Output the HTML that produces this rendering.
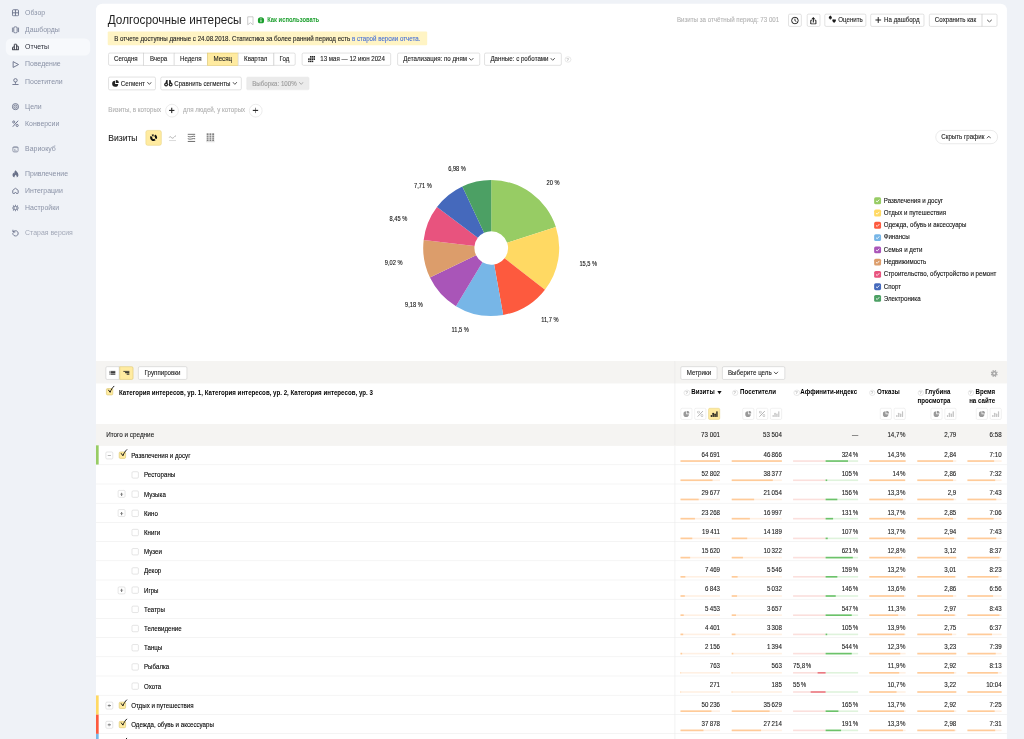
<!DOCTYPE html><html lang="ru"><head><meta charset="utf-8"><title>Долгосрочные интересы</title><style>
*{box-sizing:border-box}
html,body{margin:0;padding:0}
body{width:1024px;height:739px;overflow:hidden;background:#eff2f7;font-family:"Liberation Sans",Arial,sans-serif;}
#root{position:absolute;left:0;top:0;width:1920px;height:1386px;transform:scale(.5333333);transform-origin:0 0;filter:blur(.5px);overflow:hidden;color:#222;font-size:13px}
.abs{position:absolute}
#side{position:absolute;left:0;top:0;width:180px;height:1386px}
.nav{position:absolute;left:11px;width:158px;height:32px;border-radius:10px;color:#8a92a6;font-size:13px;line-height:32px;white-space:nowrap}
.nav.on{background:#f7f9fc;color:#2b2e3a}
.nav svg{position:absolute;left:11px;top:9.3px;width:14px;height:14px;color:#6a728a}
.nav.on svg{color:#2b2e3a}
.nav span{position:absolute;left:36px;top:0}
#card{-webkit-text-stroke:.2px;position:absolute;left:180px;top:7px;width:1708px;height:1400px;background:#fff;border-radius:12px 12px 0 0}
.btn{position:absolute;height:24px;border:1px solid #c9c9c9;border-radius:3px;background:#fff;font-size:13px;line-height:22px;text-align:center;color:#222;white-space:nowrap;display:flex;justify-content:center;align-items:center}
.btn.y{background:#ffeba0;border-color:#dcc56e}
.btn.g{background:#ebebeb;border-color:#ebebeb;color:#999}
.t{position:absolute;white-space:nowrap;transform:scaleX(.89);transform-origin:0 50%}
.sx{display:inline-block;transform:scaleX(.89);transform-origin:50% 50%;white-space:nowrap}
.sxl{display:inline-block;transform:scaleX(.89);transform-origin:0 50%;white-space:nowrap}
.chev{display:inline-block;width:10.5px;height:6.5px;vertical-align:1px;margin-left:4px}
.ck{position:absolute;width:13px;height:13px;border:1px solid #cdcdcd;border-radius:2.5px;background:#fff}
.ck.on{background:#ffeba0;border-color:#d4bd5e}
.ck.on svg{position:absolute;left:1px;top:-6px;width:15px;height:16px}
.tg{position:absolute;width:14px;height:14px;border:1px solid #d0d0d0;border-radius:2.5px;background:#fff}
.tg:before{content:"";position:absolute;left:3px;top:5.5px;width:6px;height:1.4px;background:#7a7a7a}
.tg.p:after{content:"";position:absolute;left:5.3px;top:3.2px;width:1.4px;height:6px;background:#7a7a7a}
.row{position:absolute;left:0;width:1708px;height:36px;border-bottom:1px solid #ececec}
.num{position:absolute;top:9px;font-size:13px;line-height:14px;text-align:right;white-space:nowrap;color:#222;transform:scaleX(.89);transform-origin:100% 50%}
.bar{position:absolute;top:28px;height:3px;background:#fff0e3}
.bar i{position:absolute;left:0;top:0;height:3px;background:#ffcb99}
.hl{position:absolute;width:11.5px;height:11.5px;border:1px solid #d6d6d6;border-radius:50%}
.hl:before{content:"?";position:absolute;left:0;top:0;width:9px;height:9px;font-size:8px;line-height:9.5px;text-align:center;color:#c4c4c4;font-weight:bold}
.ib{position:absolute;width:22px;height:22px;border:1px solid #e4e4e4;border-radius:3px;background:#fff}
.ib.y{background:#ffeba0;border-color:#e3cf80}
.ib svg{position:absolute;left:4px;top:4px;width:12px;height:12px}
.hd{-webkit-text-stroke:0;position:absolute;font-weight:bold;font-size:13px;line-height:16px;text-align:right;white-space:nowrap;color:#000;transform:scaleX(.89);transform-origin:100% 50%}
</style></head><body><div id="root">
<div id="side">
<div class="nav" style="top:7.7px"><svg viewBox="0 0 16 16"><rect x="1.5" y="1.5" width="13" height="13" rx="2" fill="none" stroke="currentColor" stroke-width="2"/><path d="M8 1.5v13M1.5 8h13" stroke="currentColor" stroke-width="2"/></svg><span>Обзор</span></div>
<div class="nav" style="top:40px"><svg viewBox="0 0 16 16"><rect x="4.4" y="1.3" width="7.2" height="13.4" rx="2.6" fill="none" stroke="currentColor" stroke-width="2"/><path d="M1.2 4v8M14.8 4v8" stroke="currentColor" stroke-width="2" stroke-linecap="round"/></svg><span>Дашборды</span></div>
<div class="nav on" style="top:72px"><svg viewBox="0 0 16 16"><path d="M1.8 14V9.2a1 1 0 0 1 1-1h2.7M5.5 14V3a1 1 0 0 1 1-1h3a1 1 0 0 1 1 1v11M10.5 6.2h2.7a1 1 0 0 1 1 1V14M1 14.1h14" fill="none" stroke="currentColor" stroke-width="2"/></svg><span>Отчеты</span></div>
<div class="nav" style="top:104.3px"><svg viewBox="0 0 16 16"><path d="M3 1.8L14.6 8 3 14.2z" fill="none" stroke="currentColor" stroke-width="2" stroke-linejoin="round"/></svg><span>Поведение</span></div>
<div class="nav" style="top:137px"><svg viewBox="0 0 16 16"><circle cx="8" cy="5.3" r="3.7" fill="none" stroke="currentColor" stroke-width="2"/><path d="M8 9.4v2.4M2.3 14.3h11.4" fill="none" stroke="currentColor" stroke-width="2" stroke-linecap="round"/></svg><span>Посетители</span></div>
<div class="nav" style="top:184px"><svg viewBox="0 0 16 16"><circle cx="8" cy="8" r="6.6" fill="none" stroke="currentColor" stroke-width="2"/><circle cx="8" cy="8" r="3.4" fill="none" stroke="currentColor" stroke-width="1.9"/><circle cx="8" cy="8" r="1" fill="currentColor"/></svg><span>Цели</span></div>
<div class="nav" style="top:216px"><svg viewBox="0 0 16 16"><circle cx="4.3" cy="4.3" r="2.3" fill="none" stroke="currentColor" stroke-width="2"/><circle cx="11.7" cy="11.7" r="2.3" fill="none" stroke="currentColor" stroke-width="2"/><path d="M13.2 2.2L2.8 13.8" stroke="currentColor" stroke-width="2.1" stroke-linecap="round"/></svg><span>Конверсии</span></div>
<div class="nav" style="top:263.3px"><svg viewBox="0 0 16 16" style="opacity:.8"><rect x="2.4" y="2.4" width="11.2" height="11.2" rx="2.6" fill="none" stroke="currentColor" stroke-width="1.7"/><path d="M2.4 4.3h11.2" stroke="currentColor" stroke-width="1.6"/><path d="M4.8 8.2c3 0 5 1.5 5.4 4.6M4.8 11h2.4v2" fill="none" stroke="currentColor" stroke-width="1.5" opacity=".85"/></svg><span>Вариокуб</span></div>
<div class="nav" style="top:309.5px"><svg viewBox="0 0 16 16"><path transform="translate(8 8) scale(1.13) translate(-8 -8.2)" d="M8.3 1C9 3.6 13.6 6 13.6 10.2c0 2.8-2 4.6-3.7 4.8.9-1.1 1-2.9-1.9-5.2-.7 1.7-2.4 2.9-1.4 5.2C4.3 14.7 2.4 13 2.4 10.2 2.4 8 3.7 6.8 4.4 5.6c.2 1 .7 1.6 1.3 2C5.6 5 6.7 2.6 8.3 1z" fill="currentColor"/></svg><span>Привлечение</span></div>
<div class="nav" style="top:341.5px"><svg viewBox="0 0 16 16"><path d="M8 2.2l5.8 4.6v5.4a1.3 1.3 0 0 1-1.3 1.3H10.2a2.2 2.2 0 0 0-4.4 0H3.5a1.3 1.3 0 0 1-1.3-1.3V6.8z" fill="none" stroke="currentColor" stroke-width="2" stroke-linejoin="round"/></svg><span>Интеграции</span></div>
<div class="nav" style="top:373.3px"><svg viewBox="0 0 16 16"><circle cx="8" cy="8" r="3.6" fill="none" stroke="currentColor" stroke-width="2"/><path d="M8 .8v2.6M8 12.6v2.6M.8 8h2.6M12.6 8h2.6M2.9 2.9l1.9 1.9M11.2 11.2l1.9 1.9M13.1 2.9l-1.9 1.9M4.8 11.2l-1.9 1.9" stroke="currentColor" stroke-width="2.3"/></svg><span>Настройки</span></div>
<div class="nav" style="top:420.5px;color:#a3a9b8"><svg viewBox="0 0 16 16"><path d="M3.2 5.4A5.8 5.8 0 1 1 2.2 9" fill="none" stroke="currentColor" stroke-width="2" stroke-linecap="round"/><path d="M2.6 1.6v4.2h4.2" fill="none" stroke="currentColor" stroke-width="2" stroke-linecap="round" stroke-linejoin="round"/></svg><span>Старая версия</span></div>
</div>
<div id="card">
<div class="t" style="left:22px;top:15px;font-size:23px;line-height:30px;color:#1f1f1f;-webkit-text-stroke:0;transform:scaleX(.96)">Долгосрочные интересы</div>
<svg class="abs" style="left:282.5px;top:22.5px;width:13px;height:18px" viewBox="0 0 13 18"><path d="M1.5 1.5h10v15L6.5 12.5 1.5 16.5z" fill="none" stroke="#bdbdbd" stroke-width="1.5"/></svg>
<svg class="abs" style="left:303px;top:24.5px;width:12.5px;height:12.5px" viewBox="0 0 13 13"><circle cx="6.5" cy="6.5" r="6.2" fill="#1a9e2c"/><rect x="5.7" y="5.4" width="1.7" height="4.6" fill="#fff"/><circle cx="6.5" cy="3.5" r="1.1" fill="#fff"/></svg>
<div class="t" style="left:321px;top:23px;font-size:13px;line-height:15px;font-weight:bold;-webkit-text-stroke:0;color:#1a9e2c;transform:scaleX(.84)">Как использовать</div>
<div class="t" style="left:1085px;top:23px;width:260px;margin-left:-64px;text-align:right;transform-origin:100% 50%;font-size:13px;line-height:15px;color:#b3b3b3">Визиты за отчётный период: 73 001</div>
<div class="btn " style="left:1297.5px;top:18.5px;width:25px;height:24.5px;line-height:22.5px;"><svg style="width:15px;height:15px;margin-top:2px" viewBox="0 0 15 15"><circle cx="7.5" cy="7.5" r="6.2" fill="none" stroke="#1a1a1a" stroke-width="1.8"/><path d="M7.5 4v3.8l2.6 1.3" fill="none" stroke="#1a1a1a" stroke-width="1.6"/></svg></div>
<div class="btn " style="left:1332.5px;top:18.5px;width:25px;height:24.5px;line-height:22.5px;"><svg style="width:14px;height:15px;margin-top:1px" viewBox="0 0 14 15"><path d="M4.2 7H2.2v7h9.6V7H9.8" fill="none" stroke="#1a1a1a" stroke-width="1.8"/><path d="M7 11V4" stroke="#1a1a1a" stroke-width="2"/><path d="M3.3 5L7 .8 10.7 5z" fill="#1a1a1a"/></svg></div>
<div class="btn " style="left:1366px;top:18.5px;width:77.5px;height:24.5px;line-height:22.5px;"><span class="sx"><svg style="width:19px;height:16.5px;vertical-align:-2.5px;margin-right:3px" viewBox="0 0 15 15"><path d="M3.8 .8c1.5 1.3 3 2.4 3 4.1a1.7 1.7 0 0 1-2.4 1.5l.5 1.4H2.7l.5-1.4A1.7 1.7 0 0 1 .8 4.9c0-1.7 1.5-2.8 3-4.1z" fill="#1a1a1a"/><path d="M11 13.8C9.3 12.4 7.5 11 7.5 9.2a1.9 1.9 0 0 1 3.5-1 1.9 1.9 0 0 1 3.5 1c0 1.8-1.8 3.2-3.5 4.6z" fill="#1a1a1a"/></svg>Оценить</span></div>
<div class="btn " style="left:1451.5px;top:18.5px;width:101.5px;height:24.5px;line-height:22.5px;"><span class="sx"><svg style="width:12.5px;height:11px;vertical-align:-1px;margin-right:6px" viewBox="0 0 11 11" preserveAspectRatio="none"><path d="M5.5 0v11M0 5.5h11" stroke="#1a1a1a" stroke-width="1.8"/></svg>На дашборд</span></div>
<div class="btn " style="left:1562px;top:18.5px;width:100px;height:24.5px;line-height:22.5px;border-radius:3px 0 0 3px"><span class="sx">Сохранить как</span></div>
<div class="btn " style="left:1661px;top:18.5px;width:29px;height:24.5px;line-height:22.5px;border-radius:0 3px 3px 0"><svg class="chev" style="margin:2px 0 0 0" viewBox="0 0 10.5 6.5"><path d="M0.8 0.9 L5.25 5.2 L9.7 0.9" fill="none" stroke="#222" stroke-width="1.5"/></svg></div>
<div class="abs" style="left:22px;top:52px;width:599px;height:26px;background:#fff4c4;border-radius:2px;padding-left:11.5px;font-size:13px;line-height:26px;white-space:nowrap;color:#222"><span class="sxl">В отчете доступны данные с 24.08.2018. Статистика за более ранний период есть <span style="color:#4670d6">в старой версии отчета.</span></span></div>
<div class="btn " style="left:22.5px;top:92px;width:67.5px;height:24px;line-height:22px;border-radius:3px 0 0 3px;"><span class="sx">Сегодня</span></div>
<div class="btn " style="left:89px;top:92px;width:57.5px;height:24px;line-height:22px;border-radius:0;"><span class="sx">Вчера</span></div>
<div class="btn " style="left:145.5px;top:92px;width:64.5px;height:24px;line-height:22px;border-radius:0;"><span class="sx">Неделя</span></div>
<div class="btn y" style="left:209px;top:92px;width:57.5px;height:24px;line-height:22px;border-radius:0;"><span class="sx">Месяц</span></div>
<div class="btn " style="left:265.5px;top:92px;width:68.5px;height:24px;line-height:22px;border-radius:0;"><span class="sx">Квартал</span></div>
<div class="btn " style="left:333px;top:92px;width:41px;height:24px;line-height:22px;border-radius:0 3px 3px 0;"><span class="sx">Год</span></div>
<div class="btn " style="left:385.5px;top:92px;width:167px;height:24px;line-height:22px;"><span class="sx"><svg style="width:15.5px;height:12px;vertical-align:-1.5px;margin-right:11px" viewBox="0 0 13 10" preserveAspectRatio="none"><g fill="#222"><rect x="4" y="0" width="2.6" height="2.6"/><rect x="7.2" y="0" width="2.6" height="2.6"/><rect x="10.4" y="0" width="2.6" height="2.6"/><rect x="0.8" y="3.6" width="2.6" height="2.6"/><rect x="4" y="3.6" width="2.6" height="2.6"/><rect x="7.2" y="3.6" width="2.6" height="2.6"/><rect x="10.4" y="3.6" width="2.6" height="2.6"/><rect x="0.8" y="7.2" width="2.6" height="2.6"/><rect x="4" y="7.2" width="2.6" height="2.6"/><rect x="7.2" y="7.2" width="2.6" height="2.6"/></g></svg>13 мая — 12 июн 2024</span></div>
<div class="btn " style="left:564.5px;top:92px;width:155px;height:24px;line-height:22px;"><span class="sx">Детализация: по дням<svg class="chev" viewBox="0 0 10.5 6.5"><path d="M0.8 0.9 L5.25 5.2 L9.7 0.9" fill="none" stroke="#222" stroke-width="1.5"/></svg></span></div>
<div class="btn " style="left:728px;top:92px;width:145px;height:24px;line-height:22px;"><span class="sx">Данные: с роботами<svg class="chev" viewBox="0 0 10.5 6.5"><path d="M0.8 0.9 L5.25 5.2 L9.7 0.9" fill="none" stroke="#222" stroke-width="1.5"/></svg></span></div>
<div class="hl" style="left:879px;top:98.5px"></div>
<div class="btn " style="left:22.5px;top:136.5px;width:89.5px;height:25px;line-height:23px;"><span class="sx"><svg style="width:15px;height:13.5px;vertical-align:-2.5px;margin-right:4px" viewBox="0 0 13 13" preserveAspectRatio="none"><path d="M6 1.2A5.6 5.6 0 1 0 11.8 7H6z" fill="#222"/><path d="M7.3 0a5.6 5.6 0 0 1 5.6 5.6H7.3z" fill="#222"/></svg>Сегмент<svg class="chev" viewBox="0 0 10.5 6.5"><path d="M0.8 0.9 L5.25 5.2 L9.7 0.9" fill="none" stroke="#222" stroke-width="1.5"/></svg></span></div>
<div class="btn " style="left:120.5px;top:136.5px;width:152.5px;height:25px;line-height:23px;"><span class="sx"><svg style="width:18.5px;height:14px;vertical-align:-2.5px;margin-right:3px" viewBox="0 0 15 12" preserveAspectRatio="none"><circle cx="3.6" cy="8" r="3.3" fill="#222"/><circle cx="11.4" cy="8" r="3.3" fill="#222"/><path d="M2.5 5L4 .8h2.2v6zM12.5 5L11 .8H8.8v6z" fill="#222"/><circle cx="3.6" cy="8" r="1.3" fill="#fff"/><circle cx="11.4" cy="8" r="1.3" fill="#fff"/></svg>Сравнить сегменты<svg class="chev" viewBox="0 0 10.5 6.5"><path d="M0.8 0.9 L5.25 5.2 L9.7 0.9" fill="none" stroke="#222" stroke-width="1.5"/></svg></span></div>
<div class="btn g" style="left:282px;top:136.5px;width:118px;height:25px;line-height:23px;"><span class="sx">Выборка: 100%<svg class="chev" viewBox="0 0 10.5 6.5"><path d="M0.8 0.9 L5.25 5.2 L9.7 0.9" fill="none" stroke="#999" stroke-width="1.5"/></svg></span></div>
<div class="t" style="left:22.5px;top:191px;font-size:13px;line-height:16px;color:#b0b0b0">Визиты, в которых</div>
<div class="abs" style="left:129.8px;top:187.5px;width:25px;height:25px;border:1px solid #dcdcdc;border-radius:50%;background:#fff"><i class="abs" style="left:6.5px;top:10.7px;width:10px;height:1.6px;background:#222"></i><i class="abs" style="left:10.7px;top:6.5px;width:1.6px;height:10px;background:#222"></i></div>
<div class="t" style="left:162.5px;top:191px;font-size:13px;line-height:16px;color:#b0b0b0">для людей, у которых</div>
<div class="abs" style="left:286.9px;top:187.5px;width:25px;height:25px;border:1px solid #dcdcdc;border-radius:50%;background:#fff"><i class="abs" style="left:6.5px;top:10.7px;width:10px;height:1.6px;background:#222"></i><i class="abs" style="left:10.7px;top:6.5px;width:1.6px;height:10px;background:#222"></i></div>
<div class="t" style="left:22.5px;top:239px;font-size:18px;line-height:24px;color:#222">Визиты</div>
<div class="btn y" style="left:92.5px;top:236.5px;width:30.5px;height:29.5px;border-radius:4px;border-color:#e6d280"></div>
<svg class="abs" style="left:99.8px;top:243.2px;width:16px;height:16px" viewBox="0 0 16 16"><path d="M9.97 3.96A4.5 4.5 0 0 1 12.04 9.97M10.65 11.64A4.5 4.5 0 0 1 3.96 6.03M5.35 4.36A4.5 4.5 0 0 1 8 3.5" fill="none" stroke="#111" stroke-width="3.8"/></svg>
<svg class="abs" style="left:135.5px;top:243.5px;width:15px;height:16px" viewBox="0 0 15 16"><path d="M1 7C2.2 4.8 3.8 4.8 5.3 6.8S8.5 8.3 10 6.5S12.5 4 14 3.5" fill="none" stroke="#9a9a9a" stroke-width="1.4"/><path d="M1 12.5h13" stroke="#cfcfcf" stroke-width="1.4"/></svg>
<svg class="abs" style="left:170.5px;top:243px;width:16px;height:17px" viewBox="0 0 16 17"><path d="M1 1.8h14M1 15.2h14" stroke="#666" stroke-width="1.8"/><path d="M1 5.6C4 6.8 6 6.8 8.5 6.1S12.5 5.2 15 5.8M1 10C4 11.2 6 11.2 8.5 10.5S12.5 9.6 15 10.2" fill="none" stroke="#666" stroke-width="1.8"/></svg>
<svg class="abs" style="left:205.5px;top:242px;width:17px;height:18px" viewBox="0 0 17 18"><g fill="#7d7d7d"><rect x="1.5" y="1" width="3.6" height="14.5"/><rect x="6.7" y="1" width="3.6" height="14.5"/><rect x="11.9" y="1" width="3.6" height="14.5"/></g><path d="M0 5h17M0 8.5h17M0 12h17" stroke="#fff" stroke-width="1"/><path d="M.5 17h16" stroke="#bbb" stroke-width="1.2"/></svg>
<div class="btn" style="left:1573.5px;top:237px;width:117px;height:25.5px;border-radius:13px;line-height:23px;border-color:#d9d9d9"><span class="sx">Скрыть график<svg class="chev" viewBox="0 0 10.5 6.5"><path d="M0.8 5.6 L5.25 1.3 L9.7 5.6" fill="none" stroke="#222" stroke-width="1.5"/></svg></span></div>
<svg class="abs" style="left:600.8px;top:318px;width:280px;height:280px" viewBox="-140 -140 280 280">
<path d="M0 -127.5A127.5 127.5 0 0 1 121.24 -39.46L29.95 -9.75A31.5 31.5 0 0 0 0 -31.5Z" fill="#97cc64"/>
<path d="M121.24 -39.46A127.5 127.5 0 0 1 100.81 78.06L24.91 19.28A31.5 31.5 0 0 0 29.95 -9.75Z" fill="#ffd963"/>
<path d="M100.81 78.06A127.5 127.5 0 0 1 22.46 125.51L5.55 31.01A31.5 31.5 0 0 0 24.91 19.28Z" fill="#fd5a3e"/>
<path d="M22.46 125.51A127.5 127.5 0 0 1 -66.12 109.02L-16.33 26.93A31.5 31.5 0 0 0 5.55 31.01Z" fill="#77b6e7"/>
<path d="M-66.12 109.02A127.5 127.5 0 0 1 -114.86 55.35L-28.38 13.67A31.5 31.5 0 0 0 -16.33 26.93Z" fill="#a955b8"/>
<path d="M-114.86 55.35A127.5 127.5 0 0 1 -126.62 -14.94L-31.28 -3.69A31.5 31.5 0 0 0 -28.38 13.67Z" fill="#dc9d6b"/>
<path d="M-126.62 -14.94A127.5 127.5 0 0 1 -101.64 -76.97L-25.11 -19.02A31.5 31.5 0 0 0 -31.28 -3.69Z" fill="#e8537e"/>
<path d="M-101.64 -76.97A127.5 127.5 0 0 1 -54.12 -115.44L-13.37 -28.52A31.5 31.5 0 0 0 -25.11 -19.02Z" fill="#4569bc"/>
<path d="M-54.12 -115.44A127.5 127.5 0 0 1 0 -127.5L0 -31.5A31.5 31.5 0 0 0 -13.37 -28.52Z" fill="#4ca064"/>
</svg>
<div class="t" style="left:826.9px;top:329.4px;width:60px;text-align:center;transform-origin:50% 50%;font-size:12px;line-height:14px;color:#111">20 %</div>
<div class="t" style="left:893px;top:480px;width:60px;text-align:center;transform-origin:50% 50%;font-size:12px;line-height:14px;color:#111">15,5 %</div>
<div class="t" style="left:820.5px;top:586px;width:60px;text-align:center;transform-origin:50% 50%;font-size:12px;line-height:14px;color:#111">11,7 %</div>
<div class="t" style="left:653.3px;top:604.4px;width:60px;text-align:center;transform-origin:50% 50%;font-size:12px;line-height:14px;color:#111">11,5 %</div>
<div class="t" style="left:566px;top:558.2px;width:60px;text-align:center;transform-origin:50% 50%;font-size:12px;line-height:14px;color:#111">9,18 %</div>
<div class="t" style="left:527.6px;top:478.7px;width:60px;text-align:center;transform-origin:50% 50%;font-size:12px;line-height:14px;color:#111">9,02 %</div>
<div class="t" style="left:537.2px;top:396px;width:60px;text-align:center;transform-origin:50% 50%;font-size:12px;line-height:14px;color:#111">8,45 %</div>
<div class="t" style="left:583.4px;top:333.5px;width:60px;text-align:center;transform-origin:50% 50%;font-size:12px;line-height:14px;color:#111">7,71 %</div>
<div class="t" style="left:646.9px;top:303.4px;width:60px;text-align:center;transform-origin:50% 50%;font-size:12px;line-height:14px;color:#111">6,98 %</div>
<div class="abs" style="left:1458.5px;top:362.8px;width:13px;height:13px;border-radius:3px;background:#97cc64"><svg class="abs" style="left:2px;top:2px;width:9px;height:9px" viewBox="0 0 9 9"><path d="M1.5 4.5l2.2 2.2 4-4.5" fill="none" stroke="#fff" stroke-width="1.6"/></svg></div>
<div class="t" style="left:1477px;top:361.3px;font-size:13px;line-height:16px;color:#111">Развлечения и досуг</div>
<div class="abs" style="left:1458.5px;top:385.8px;width:13px;height:13px;border-radius:3px;background:#ffd963"><svg class="abs" style="left:2px;top:2px;width:9px;height:9px" viewBox="0 0 9 9"><path d="M1.5 4.5l2.2 2.2 4-4.5" fill="none" stroke="#fff" stroke-width="1.6"/></svg></div>
<div class="t" style="left:1477px;top:384.2px;font-size:13px;line-height:16px;color:#111">Отдых и путешествия</div>
<div class="abs" style="left:1458.5px;top:408.7px;width:13px;height:13px;border-radius:3px;background:#fd5a3e"><svg class="abs" style="left:2px;top:2px;width:9px;height:9px" viewBox="0 0 9 9"><path d="M1.5 4.5l2.2 2.2 4-4.5" fill="none" stroke="#fff" stroke-width="1.6"/></svg></div>
<div class="t" style="left:1477px;top:407.2px;font-size:13px;line-height:16px;color:#111">Одежда, обувь и аксессуары</div>
<div class="abs" style="left:1458.5px;top:431.6px;width:13px;height:13px;border-radius:3px;background:#77b6e7"><svg class="abs" style="left:2px;top:2px;width:9px;height:9px" viewBox="0 0 9 9"><path d="M1.5 4.5l2.2 2.2 4-4.5" fill="none" stroke="#fff" stroke-width="1.6"/></svg></div>
<div class="t" style="left:1477px;top:430.1px;font-size:13px;line-height:16px;color:#111">Финансы</div>
<div class="abs" style="left:1458.5px;top:454.6px;width:13px;height:13px;border-radius:3px;background:#a955b8"><svg class="abs" style="left:2px;top:2px;width:9px;height:9px" viewBox="0 0 9 9"><path d="M1.5 4.5l2.2 2.2 4-4.5" fill="none" stroke="#fff" stroke-width="1.6"/></svg></div>
<div class="t" style="left:1477px;top:453.1px;font-size:13px;line-height:16px;color:#111">Семья и дети</div>
<div class="abs" style="left:1458.5px;top:477.6px;width:13px;height:13px;border-radius:3px;background:#dc9d6b"><svg class="abs" style="left:2px;top:2px;width:9px;height:9px" viewBox="0 0 9 9"><path d="M1.5 4.5l2.2 2.2 4-4.5" fill="none" stroke="#fff" stroke-width="1.6"/></svg></div>
<div class="t" style="left:1477px;top:476.1px;font-size:13px;line-height:16px;color:#111">Недвижимость</div>
<div class="abs" style="left:1458.5px;top:500.5px;width:13px;height:13px;border-radius:3px;background:#e8537e"><svg class="abs" style="left:2px;top:2px;width:9px;height:9px" viewBox="0 0 9 9"><path d="M1.5 4.5l2.2 2.2 4-4.5" fill="none" stroke="#fff" stroke-width="1.6"/></svg></div>
<div class="t" style="left:1477px;top:499px;font-size:13px;line-height:16px;color:#111">Строительство, обустройство и ремонт</div>
<div class="abs" style="left:1458.5px;top:523.5px;width:13px;height:13px;border-radius:3px;background:#4569bc"><svg class="abs" style="left:2px;top:2px;width:9px;height:9px" viewBox="0 0 9 9"><path d="M1.5 4.5l2.2 2.2 4-4.5" fill="none" stroke="#fff" stroke-width="1.6"/></svg></div>
<div class="t" style="left:1477px;top:522px;font-size:13px;line-height:16px;color:#111">Спорт</div>
<div class="abs" style="left:1458.5px;top:546.4px;width:13px;height:13px;border-radius:3px;background:#4ca064"><svg class="abs" style="left:2px;top:2px;width:9px;height:9px" viewBox="0 0 9 9"><path d="M1.5 4.5l2.2 2.2 4-4.5" fill="none" stroke="#fff" stroke-width="1.6"/></svg></div>
<div class="t" style="left:1477px;top:544.9px;font-size:13px;line-height:16px;color:#111">Электроника</div>
<div class="abs" style="left:0;top:670px;width:1708px;height:42px;background:#f5f4f2"></div>
<div class="btn " style="left:17.8px;top:679.7px;width:26.7px;height:25px;line-height:23px;border-radius:3px 0 0 3px"><svg style="width:11.5px;height:7.5px" viewBox="0 0 11.5 7.5"><g fill="#222"><rect x="0" y="0" width="2" height="2"/><rect x="2.8" y="0" width="8.7" height="2"/><rect x="0" y="2.75" width="2" height="2"/><rect x="2.8" y="2.75" width="8.7" height="2"/><rect x="0" y="5.5" width="2" height="2"/><rect x="2.8" y="5.5" width="8.7" height="2"/></g></svg></div>
<div class="btn y" style="left:43.5px;top:679.7px;width:26.5px;height:25px;line-height:23px;border-radius:0 3px 3px 0"><svg style="width:12px;height:7.5px" viewBox="0 0 12 7.5"><g fill="#222"><rect x="0" y="0" width="12" height="2"/><rect x="3.5" y="2.75" width="8.5" height="2"/><rect x="6.5" y="5.5" width="5.5" height="2"/></g></svg></div>
<div class="btn " style="left:79px;top:679.7px;width:92px;height:25px;line-height:23px;"><span class="sx">Группировки</span></div>
<div class="btn " style="left:1096px;top:679.7px;width:69px;height:25px;line-height:23px;"><span class="sx">Метрики</span></div>
<div class="btn " style="left:1174px;top:679.7px;width:117.5px;height:25px;line-height:23px;"><span class="sx">Выберите цель<svg class="chev" viewBox="0 0 10.5 6.5"><path d="M0.8 0.9 L5.25 5.2 L9.7 0.9" fill="none" stroke="#222" stroke-width="1.5"/></svg></span></div>
<svg class="abs" style="left:1676.7px;top:686.4px;width:14.6px;height:14.6px" viewBox="0 0 16 16"><circle cx="8" cy="8" r="3.7" fill="none" stroke="#a9a9a9" stroke-width="3.3"/><path d="M12.25 9.76L14.65 10.76M9.76 12.25L10.76 14.65M6.24 12.25L5.24 14.65M3.75 9.76L1.35 10.76M3.75 6.24L1.35 5.24M6.24 3.75L5.24 1.35M9.76 3.75L10.76 1.35M12.25 6.24L14.65 5.24" stroke="#a9a9a9" stroke-width="2.7"/></svg>
<div class="abs" style="left:1084.5px;top:670px;width:1px;height:800px;background:#e6e6e6"></div>
<div class="ck on" style="left:19px;top:721px"><svg viewBox="0 0 15 16"><path d="M2 7.8l3.5 4.8C7 8 9.8 3.8 13.3 .6" fill="none" stroke="#111" stroke-width="1.8"/></svg></div>
<div class="t" style="left:43px;top:720.5px;font-size:13px;line-height:16px;font-weight:bold;-webkit-text-stroke:0;color:#000">Категория интересов, ур. 1, Категория интересов, ур. 2, Категория интересов, ур. 3</div>
<div class="hd" style="left:959.6px;width:200px;top:720.3px">Визиты</div>
<div class="abs" style="left:1165px;top:726px;width:0;height:0;border-left:4px solid transparent;border-right:4px solid transparent;border-top:6px solid #111"></div>
<div class="hd" style="left:1075px;width:200px;top:720.3px">Посетители</div>
<div class="hd" style="left:1227px;width:200px;top:720.3px">Аффинити-индекс</div>
<div class="hd" style="left:1307px;width:200px;top:720.3px">Отказы</div>
<div class="hd" style="left:1401.7px;width:200px;top:720.3px">Глубина<br>просмотра</div>
<div class="hd" style="left:1486px;width:200px;top:720.3px">Время<br>на сайте</div>
<div class="hl" style="left:1102.1px;top:723.5px"></div>
<div class="hl" style="left:1192.5px;top:723.5px"></div>
<div class="hl" style="left:1308.1px;top:723.5px"></div>
<div class="hl" style="left:1449.5px;top:723.5px"></div>
<div class="hl" style="left:1540.5px;top:723.5px"></div>
<div class="hl" style="left:1634.5px;top:723.5px"></div>
<div class="ib " style="left:1096px;top:758px"><svg viewBox="0 0 12 12"><path d="M5.5 1.2A5.3 5.3 0 1 0 10.8 6.5H5.5z" fill="#999"/><path d="M6.7 0a5.3 5.3 0 0 1 5.3 5.3H6.7z" fill="#999"/></svg></div>
<div class="ib " style="left:1122px;top:758px"><svg viewBox="0 0 12 12"><circle cx="2.6" cy="2.8" r="2" fill="none" stroke="#a8a8a8" stroke-width="1.1"/><circle cx="9.4" cy="9.2" r="2" fill="none" stroke="#a8a8a8" stroke-width="1.1"/><path d="M11 .8L1 11.2" stroke="#8f8f8f" stroke-width="1.3"/></svg></div>
<div class="ib y" style="left:1148px;top:758px"><svg viewBox="0 0 14 12" style="left:3px;width:14px"><g fill="#111"><rect x="0.3" y="8" width="2.5" height="4" rx="1"/><rect x="3.9" y="4" width="2.5" height="8" rx="1"/><rect x="7.5" y="5.5" width="2.5" height="6.5" rx="1"/><rect x="11.1" y="1" width="2.5" height="11" rx="1"/></g></svg></div>
<div class="ib " style="left:1212px;top:758px"><svg viewBox="0 0 12 12"><path d="M5.5 1.2A5.3 5.3 0 1 0 10.8 6.5H5.5z" fill="#999"/><path d="M6.7 0a5.3 5.3 0 0 1 5.3 5.3H6.7z" fill="#999"/></svg></div>
<div class="ib " style="left:1238px;top:758px"><svg viewBox="0 0 12 12"><circle cx="2.6" cy="2.8" r="2" fill="none" stroke="#a8a8a8" stroke-width="1.1"/><circle cx="9.4" cy="9.2" r="2" fill="none" stroke="#a8a8a8" stroke-width="1.1"/><path d="M11 .8L1 11.2" stroke="#8f8f8f" stroke-width="1.3"/></svg></div>
<div class="ib " style="left:1264px;top:758px"><svg viewBox="0 0 14 12" style="left:3px;width:14px"><g fill="#c4c4c4"><rect x="0.3" y="8" width="2.5" height="4" rx="1"/><rect x="3.9" y="4" width="2.5" height="8" rx="1"/><rect x="7.5" y="5.5" width="2.5" height="6.5" rx="1"/><rect x="11.1" y="1" width="2.5" height="11" rx="1"/></g></svg></div>
<div class="ib " style="left:1470px;top:758px"><svg viewBox="0 0 12 12"><path d="M5.5 1.2A5.3 5.3 0 1 0 10.8 6.5H5.5z" fill="#999"/><path d="M6.7 0a5.3 5.3 0 0 1 5.3 5.3H6.7z" fill="#999"/></svg></div>
<div class="ib " style="left:1496px;top:758px"><svg viewBox="0 0 14 12" style="left:3px;width:14px"><g fill="#c4c4c4"><rect x="0.3" y="8" width="2.5" height="4" rx="1"/><rect x="3.9" y="4" width="2.5" height="8" rx="1"/><rect x="7.5" y="5.5" width="2.5" height="6.5" rx="1"/><rect x="11.1" y="1" width="2.5" height="11" rx="1"/></g></svg></div>
<div class="ib " style="left:1565px;top:758px"><svg viewBox="0 0 12 12"><path d="M5.5 1.2A5.3 5.3 0 1 0 10.8 6.5H5.5z" fill="#999"/><path d="M6.7 0a5.3 5.3 0 0 1 5.3 5.3H6.7z" fill="#999"/></svg></div>
<div class="ib " style="left:1591px;top:758px"><svg viewBox="0 0 14 12" style="left:3px;width:14px"><g fill="#c4c4c4"><rect x="0.3" y="8" width="2.5" height="4" rx="1"/><rect x="3.9" y="4" width="2.5" height="8" rx="1"/><rect x="7.5" y="5.5" width="2.5" height="6.5" rx="1"/><rect x="11.1" y="1" width="2.5" height="11" rx="1"/></g></svg></div>
<div class="ib " style="left:1650px;top:758px"><svg viewBox="0 0 12 12"><path d="M5.5 1.2A5.3 5.3 0 1 0 10.8 6.5H5.5z" fill="#999"/><path d="M6.7 0a5.3 5.3 0 0 1 5.3 5.3H6.7z" fill="#999"/></svg></div>
<div class="ib " style="left:1676px;top:758px"><svg viewBox="0 0 14 12" style="left:3px;width:14px"><g fill="#c4c4c4"><rect x="0.3" y="8" width="2.5" height="4" rx="1"/><rect x="3.9" y="4" width="2.5" height="8" rx="1"/><rect x="7.5" y="5.5" width="2.5" height="6.5" rx="1"/><rect x="11.1" y="1" width="2.5" height="11" rx="1"/></g></svg></div>
<div class="abs" style="left:0;top:788px;width:1708px;height:40.5px;background:#f5f4f2"></div>
<div class="abs" style="left:1084.5px;top:788px;width:1px;height:40px;background:#e6e6e6"></div>
<div class="t" style="left:18.5px;top:800.5px;font-size:13px;line-height:16px;color:#222;transform:scaleX(.915)">Итого и средние</div>
<div class="num" style="left:1020px;width:150px;top:800.7px">73 001</div>
<div class="num" style="left:1136px;width:150px;top:800.7px">53 504</div>
<div class="num" style="left:1278.6px;width:150px;top:800.7px">—</div>
<div class="num" style="left:1368px;width:150px;top:800.7px">14,7<span style="margin-left:1.5px">%</span></div>
<div class="num" style="left:1463px;width:150px;top:800.7px">2,79</div>
<div class="num" style="left:1548px;width:150px;top:800.7px">6:58</div>
<div class="abs" style="left:0;top:863.6px;width:1708px;height:1px;background:#ebebeb"></div>
<div class="abs" style="left:0;top:828.3px;width:4.5px;height:36px;background:#97cc64"></div>
<div class="tg " style="left:17.5px;top:840.3px"></div>
<div class="ck on" style="left:43px;top:840.3px"><svg viewBox="0 0 15 16"><path d="M2 7.8l3.5 4.8C7 8 9.8 3.8 13.3 .6" fill="none" stroke="#111" stroke-width="1.8"/></svg></div>
<div class="t" style="left:66.3px;top:839.5px;font-size:13px;line-height:16px;color:#000">Развлечения и досуг</div>
<div class="num" style="left:1020px;width:150px;top:838.8px">64 691</div>
<div class="num" style="left:1136px;width:150px;top:838.8px">46 866</div>
<div class="num" style="left:1278.6px;width:150px;top:838.8px">324<span style="margin-left:1.5px">%</span></div>
<div class="num" style="left:1368px;width:150px;top:838.8px">14,3<span style="margin-left:1.5px">%</span></div>
<div class="num" style="left:1463px;width:150px;top:838.8px">2,84</div>
<div class="num" style="left:1548px;width:150px;top:838.8px">7:10</div>
<div class="bar" style="left:1096px;top:856.3px;width:74px"><i style="width:74px"></i></div>
<div class="bar" style="left:1192.3px;top:856.3px;width:93.7px"><i style="width:93.7px"></i></div>
<div class="bar" style="left:1449.6px;top:856.3px;width:68.4px"><i style="width:68.4px"></i></div>
<div class="bar" style="left:1539.8px;top:856.3px;width:73.2px"><i style="width:67.1px"></i></div>
<div class="bar" style="left:1634px;top:856.3px;width:64px"><i style="width:49.7px"></i></div>
<div class="abs" style="left:1307px;top:856.3px;width:60.8px;height:3px;background:#fbdfdc"></div>
<div class="abs" style="left:1367.8px;top:856.3px;width:60.8px;height:3px;background:#dff3dc"></div>
<div class="abs" style="left:1367.8px;top:856.3px;width:42px;height:3px;background:#6cc26a"></div>
<div class="abs" style="left:0;top:899.6px;width:1708px;height:1px;background:#ebebeb"></div>
<div class="ck" style="left:66.7px;top:876.8px"></div>
<div class="t" style="left:90px;top:875.5px;font-size:13px;line-height:16px;color:#000">Рестораны</div>
<div class="num" style="left:1020px;width:150px;top:874.8px">52 802</div>
<div class="num" style="left:1136px;width:150px;top:874.8px">38 377</div>
<div class="num" style="left:1278.6px;width:150px;top:874.8px">105<span style="margin-left:1.5px">%</span></div>
<div class="num" style="left:1368px;width:150px;top:874.8px">14<span style="margin-left:1.5px">%</span></div>
<div class="num" style="left:1463px;width:150px;top:874.8px">2,86</div>
<div class="num" style="left:1548px;width:150px;top:874.8px">7:32</div>
<div class="bar" style="left:1096px;top:892.3px;width:74px"><i style="width:60.4px"></i></div>
<div class="bar" style="left:1192.3px;top:892.3px;width:93.7px"><i style="width:76.7px"></i></div>
<div class="bar" style="left:1449.6px;top:892.3px;width:68.4px"><i style="width:67px"></i></div>
<div class="bar" style="left:1539.8px;top:892.3px;width:73.2px"><i style="width:67.5px"></i></div>
<div class="bar" style="left:1634px;top:892.3px;width:64px"><i style="width:52.2px"></i></div>
<div class="abs" style="left:1307px;top:892.3px;width:60.8px;height:3px;background:#fbdfdc"></div>
<div class="abs" style="left:1367.8px;top:892.3px;width:60.8px;height:3px;background:#dff3dc"></div>
<div class="abs" style="left:1367.8px;top:892.3px;width:3px;height:3px;background:#6cc26a"></div>
<div class="abs" style="left:0;top:935.7px;width:1708px;height:1px;background:#ebebeb"></div>
<div class="tg p" style="left:41.2px;top:912.4px"></div>
<div class="ck" style="left:66.7px;top:912.9px"></div>
<div class="t" style="left:90px;top:911.6px;font-size:13px;line-height:16px;color:#000">Музыка</div>
<div class="num" style="left:1020px;width:150px;top:910.9px">29 677</div>
<div class="num" style="left:1136px;width:150px;top:910.9px">21 054</div>
<div class="num" style="left:1278.6px;width:150px;top:910.9px">156<span style="margin-left:1.5px">%</span></div>
<div class="num" style="left:1368px;width:150px;top:910.9px">13,3<span style="margin-left:1.5px">%</span></div>
<div class="num" style="left:1463px;width:150px;top:910.9px">2,9</div>
<div class="num" style="left:1548px;width:150px;top:910.9px">7:43</div>
<div class="bar" style="left:1096px;top:928.4px;width:74px"><i style="width:33.9px"></i></div>
<div class="bar" style="left:1192.3px;top:928.4px;width:93.7px"><i style="width:42.1px"></i></div>
<div class="bar" style="left:1449.6px;top:928.4px;width:68.4px"><i style="width:63.6px"></i></div>
<div class="bar" style="left:1539.8px;top:928.4px;width:73.2px"><i style="width:68.5px"></i></div>
<div class="bar" style="left:1634px;top:928.4px;width:64px"><i style="width:53.5px"></i></div>
<div class="abs" style="left:1307px;top:928.4px;width:60.8px;height:3px;background:#fbdfdc"></div>
<div class="abs" style="left:1367.8px;top:928.4px;width:60.8px;height:3px;background:#dff3dc"></div>
<div class="abs" style="left:1367.8px;top:928.4px;width:21.8px;height:3px;background:#6cc26a"></div>
<div class="abs" style="left:0;top:971.7px;width:1708px;height:1px;background:#ebebeb"></div>
<div class="tg p" style="left:41.2px;top:948.4px"></div>
<div class="ck" style="left:66.7px;top:948.9px"></div>
<div class="t" style="left:90px;top:947.6px;font-size:13px;line-height:16px;color:#000">Кино</div>
<div class="num" style="left:1020px;width:150px;top:946.9px">23 268</div>
<div class="num" style="left:1136px;width:150px;top:946.9px">16 997</div>
<div class="num" style="left:1278.6px;width:150px;top:946.9px">131<span style="margin-left:1.5px">%</span></div>
<div class="num" style="left:1368px;width:150px;top:946.9px">13,7<span style="margin-left:1.5px">%</span></div>
<div class="num" style="left:1463px;width:150px;top:946.9px">2,85</div>
<div class="num" style="left:1548px;width:150px;top:946.9px">7:06</div>
<div class="bar" style="left:1096px;top:964.4px;width:74px"><i style="width:26.6px"></i></div>
<div class="bar" style="left:1192.3px;top:964.4px;width:93.7px"><i style="width:34px"></i></div>
<div class="bar" style="left:1449.6px;top:964.4px;width:68.4px"><i style="width:65.5px"></i></div>
<div class="bar" style="left:1539.8px;top:964.4px;width:73.2px"><i style="width:67.3px"></i></div>
<div class="bar" style="left:1634px;top:964.4px;width:64px"><i style="width:49.2px"></i></div>
<div class="abs" style="left:1307px;top:964.4px;width:60.8px;height:3px;background:#fbdfdc"></div>
<div class="abs" style="left:1367.8px;top:964.4px;width:60.8px;height:3px;background:#dff3dc"></div>
<div class="abs" style="left:1367.8px;top:964.4px;width:14.4px;height:3px;background:#6cc26a"></div>
<div class="abs" style="left:0;top:1007.8px;width:1708px;height:1px;background:#ebebeb"></div>
<div class="ck" style="left:66.7px;top:985px"></div>
<div class="t" style="left:90px;top:983.7px;font-size:13px;line-height:16px;color:#000">Книги</div>
<div class="num" style="left:1020px;width:150px;top:983px">19 411</div>
<div class="num" style="left:1136px;width:150px;top:983px">14 189</div>
<div class="num" style="left:1278.6px;width:150px;top:983px">107<span style="margin-left:1.5px">%</span></div>
<div class="num" style="left:1368px;width:150px;top:983px">13,7<span style="margin-left:1.5px">%</span></div>
<div class="num" style="left:1463px;width:150px;top:983px">2,94</div>
<div class="num" style="left:1548px;width:150px;top:983px">7:43</div>
<div class="bar" style="left:1096px;top:1000.5px;width:74px"><i style="width:22.2px"></i></div>
<div class="bar" style="left:1192.3px;top:1000.5px;width:93.7px"><i style="width:28.4px"></i></div>
<div class="bar" style="left:1449.6px;top:1000.5px;width:68.4px"><i style="width:65.5px"></i></div>
<div class="bar" style="left:1539.8px;top:1000.5px;width:73.2px"><i style="width:69.4px"></i></div>
<div class="bar" style="left:1634px;top:1000.5px;width:64px"><i style="width:53.5px"></i></div>
<div class="abs" style="left:1307px;top:1000.5px;width:60.8px;height:3px;background:#fbdfdc"></div>
<div class="abs" style="left:1367.8px;top:1000.5px;width:60.8px;height:3px;background:#dff3dc"></div>
<div class="abs" style="left:1367.8px;top:1000.5px;width:4px;height:3px;background:#6cc26a"></div>
<div class="abs" style="left:0;top:1043.8px;width:1708px;height:1px;background:#ebebeb"></div>
<div class="ck" style="left:66.7px;top:1021px"></div>
<div class="t" style="left:90px;top:1019.7px;font-size:13px;line-height:16px;color:#000">Музеи</div>
<div class="num" style="left:1020px;width:150px;top:1019px">15 620</div>
<div class="num" style="left:1136px;width:150px;top:1019px">10 322</div>
<div class="num" style="left:1278.6px;width:150px;top:1019px">621<span style="margin-left:1.5px">%</span></div>
<div class="num" style="left:1368px;width:150px;top:1019px">12,8<span style="margin-left:1.5px">%</span></div>
<div class="num" style="left:1463px;width:150px;top:1019px">3,12</div>
<div class="num" style="left:1548px;width:150px;top:1019px">8:37</div>
<div class="bar" style="left:1096px;top:1036.5px;width:74px"><i style="width:17.9px"></i></div>
<div class="bar" style="left:1192.3px;top:1036.5px;width:93.7px"><i style="width:20.6px"></i></div>
<div class="bar" style="left:1449.6px;top:1036.5px;width:68.4px"><i style="width:61.2px"></i></div>
<div class="bar" style="left:1539.8px;top:1036.5px;width:73.2px"><i style="width:73.2px"></i></div>
<div class="bar" style="left:1634px;top:1036.5px;width:64px"><i style="width:59.7px"></i></div>
<div class="abs" style="left:1307px;top:1036.5px;width:60.8px;height:3px;background:#fbdfdc"></div>
<div class="abs" style="left:1367.8px;top:1036.5px;width:60.8px;height:3px;background:#dff3dc"></div>
<div class="abs" style="left:1367.8px;top:1036.5px;width:51px;height:3px;background:#6cc26a"></div>
<div class="abs" style="left:0;top:1079.9px;width:1708px;height:1px;background:#ebebeb"></div>
<div class="ck" style="left:66.7px;top:1057.1px"></div>
<div class="t" style="left:90px;top:1055.8px;font-size:13px;line-height:16px;color:#000">Декор</div>
<div class="num" style="left:1020px;width:150px;top:1055.1px">7 469</div>
<div class="num" style="left:1136px;width:150px;top:1055.1px">5 546</div>
<div class="num" style="left:1278.6px;width:150px;top:1055.1px">159<span style="margin-left:1.5px">%</span></div>
<div class="num" style="left:1368px;width:150px;top:1055.1px">13,2<span style="margin-left:1.5px">%</span></div>
<div class="num" style="left:1463px;width:150px;top:1055.1px">3,01</div>
<div class="num" style="left:1548px;width:150px;top:1055.1px">8:23</div>
<div class="bar" style="left:1096px;top:1072.6px;width:74px"><i style="width:8.5px"></i></div>
<div class="bar" style="left:1192.3px;top:1072.6px;width:93.7px"><i style="width:11.1px"></i></div>
<div class="bar" style="left:1449.6px;top:1072.6px;width:68.4px"><i style="width:63.1px"></i></div>
<div class="bar" style="left:1539.8px;top:1072.6px;width:73.2px"><i style="width:71.1px"></i></div>
<div class="bar" style="left:1634px;top:1072.6px;width:64px"><i style="width:58.1px"></i></div>
<div class="abs" style="left:1307px;top:1072.6px;width:60.8px;height:3px;background:#fbdfdc"></div>
<div class="abs" style="left:1367.8px;top:1072.6px;width:60.8px;height:3px;background:#dff3dc"></div>
<div class="abs" style="left:1367.8px;top:1072.6px;width:22.6px;height:3px;background:#6cc26a"></div>
<div class="abs" style="left:0;top:1115.9px;width:1708px;height:1px;background:#ebebeb"></div>
<div class="tg p" style="left:41.2px;top:1092.6px"></div>
<div class="ck" style="left:66.7px;top:1093.1px"></div>
<div class="t" style="left:90px;top:1091.8px;font-size:13px;line-height:16px;color:#000">Игры</div>
<div class="num" style="left:1020px;width:150px;top:1091.1px">6 843</div>
<div class="num" style="left:1136px;width:150px;top:1091.1px">5 032</div>
<div class="num" style="left:1278.6px;width:150px;top:1091.1px">146<span style="margin-left:1.5px">%</span></div>
<div class="num" style="left:1368px;width:150px;top:1091.1px">13,6<span style="margin-left:1.5px">%</span></div>
<div class="num" style="left:1463px;width:150px;top:1091.1px">2,86</div>
<div class="num" style="left:1548px;width:150px;top:1091.1px">6:56</div>
<div class="bar" style="left:1096px;top:1108.6px;width:74px"><i style="width:7.8px"></i></div>
<div class="bar" style="left:1192.3px;top:1108.6px;width:93.7px"><i style="width:10.1px"></i></div>
<div class="bar" style="left:1449.6px;top:1108.6px;width:68.4px"><i style="width:65.1px"></i></div>
<div class="bar" style="left:1539.8px;top:1108.6px;width:73.2px"><i style="width:67.5px"></i></div>
<div class="bar" style="left:1634px;top:1108.6px;width:64px"><i style="width:48.1px"></i></div>
<div class="abs" style="left:1307px;top:1108.6px;width:60.8px;height:3px;background:#fbdfdc"></div>
<div class="abs" style="left:1367.8px;top:1108.6px;width:60.8px;height:3px;background:#dff3dc"></div>
<div class="abs" style="left:1367.8px;top:1108.6px;width:19.2px;height:3px;background:#6cc26a"></div>
<div class="abs" style="left:0;top:1152px;width:1708px;height:1px;background:#ebebeb"></div>
<div class="ck" style="left:66.7px;top:1129.2px"></div>
<div class="t" style="left:90px;top:1127.9px;font-size:13px;line-height:16px;color:#000">Театры</div>
<div class="num" style="left:1020px;width:150px;top:1127.2px">5 453</div>
<div class="num" style="left:1136px;width:150px;top:1127.2px">3 657</div>
<div class="num" style="left:1278.6px;width:150px;top:1127.2px">547<span style="margin-left:1.5px">%</span></div>
<div class="num" style="left:1368px;width:150px;top:1127.2px">11,3<span style="margin-left:1.5px">%</span></div>
<div class="num" style="left:1463px;width:150px;top:1127.2px">2,97</div>
<div class="num" style="left:1548px;width:150px;top:1127.2px">8:43</div>
<div class="bar" style="left:1096px;top:1144.7px;width:74px"><i style="width:6.2px"></i></div>
<div class="bar" style="left:1192.3px;top:1144.7px;width:93.7px"><i style="width:7.3px"></i></div>
<div class="bar" style="left:1449.6px;top:1144.7px;width:68.4px"><i style="width:54.1px"></i></div>
<div class="bar" style="left:1539.8px;top:1144.7px;width:73.2px"><i style="width:70.1px"></i></div>
<div class="bar" style="left:1634px;top:1144.7px;width:64px"><i style="width:60.4px"></i></div>
<div class="abs" style="left:1307px;top:1144.7px;width:60.8px;height:3px;background:#fbdfdc"></div>
<div class="abs" style="left:1367.8px;top:1144.7px;width:60.8px;height:3px;background:#dff3dc"></div>
<div class="abs" style="left:1367.8px;top:1144.7px;width:49.7px;height:3px;background:#6cc26a"></div>
<div class="abs" style="left:0;top:1188px;width:1708px;height:1px;background:#ebebeb"></div>
<div class="ck" style="left:66.7px;top:1165.2px"></div>
<div class="t" style="left:90px;top:1163.9px;font-size:13px;line-height:16px;color:#000">Телевидение</div>
<div class="num" style="left:1020px;width:150px;top:1163.2px">4 401</div>
<div class="num" style="left:1136px;width:150px;top:1163.2px">3 308</div>
<div class="num" style="left:1278.6px;width:150px;top:1163.2px">105<span style="margin-left:1.5px">%</span></div>
<div class="num" style="left:1368px;width:150px;top:1163.2px">13,9<span style="margin-left:1.5px">%</span></div>
<div class="num" style="left:1463px;width:150px;top:1163.2px">2,75</div>
<div class="num" style="left:1548px;width:150px;top:1163.2px">6:37</div>
<div class="bar" style="left:1096px;top:1180.7px;width:74px"><i style="width:5px"></i></div>
<div class="bar" style="left:1192.3px;top:1180.7px;width:93.7px"><i style="width:6.6px"></i></div>
<div class="bar" style="left:1449.6px;top:1180.7px;width:68.4px"><i style="width:66.5px"></i></div>
<div class="bar" style="left:1539.8px;top:1180.7px;width:73.2px"><i style="width:64.9px"></i></div>
<div class="bar" style="left:1634px;top:1180.7px;width:64px"><i style="width:45.9px"></i></div>
<div class="abs" style="left:1307px;top:1180.7px;width:60.8px;height:3px;background:#fbdfdc"></div>
<div class="abs" style="left:1367.8px;top:1180.7px;width:60.8px;height:3px;background:#dff3dc"></div>
<div class="abs" style="left:1367.8px;top:1180.7px;width:3px;height:3px;background:#6cc26a"></div>
<div class="abs" style="left:0;top:1224px;width:1708px;height:1px;background:#ebebeb"></div>
<div class="ck" style="left:66.7px;top:1201.2px"></div>
<div class="t" style="left:90px;top:1200px;font-size:13px;line-height:16px;color:#000">Танцы</div>
<div class="num" style="left:1020px;width:150px;top:1199.2px">2 156</div>
<div class="num" style="left:1136px;width:150px;top:1199.2px">1 394</div>
<div class="num" style="left:1278.6px;width:150px;top:1199.2px">544<span style="margin-left:1.5px">%</span></div>
<div class="num" style="left:1368px;width:150px;top:1199.2px">12,3<span style="margin-left:1.5px">%</span></div>
<div class="num" style="left:1463px;width:150px;top:1199.2px">3,23</div>
<div class="num" style="left:1548px;width:150px;top:1199.2px">7:39</div>
<div class="bar" style="left:1096px;top:1216.8px;width:74px"><i style="width:2.5px"></i></div>
<div class="bar" style="left:1192.3px;top:1216.8px;width:93.7px"><i style="width:2.8px"></i></div>
<div class="bar" style="left:1449.6px;top:1216.8px;width:68.4px"><i style="width:58.8px"></i></div>
<div class="bar" style="left:1539.8px;top:1216.8px;width:73.2px"><i style="width:73.2px"></i></div>
<div class="bar" style="left:1634px;top:1216.8px;width:64px"><i style="width:53px"></i></div>
<div class="abs" style="left:1307px;top:1216.8px;width:60.8px;height:3px;background:#fbdfdc"></div>
<div class="abs" style="left:1367.8px;top:1216.8px;width:60.8px;height:3px;background:#dff3dc"></div>
<div class="abs" style="left:1367.8px;top:1216.8px;width:49.6px;height:3px;background:#6cc26a"></div>
<div class="abs" style="left:0;top:1260.1px;width:1708px;height:1px;background:#ebebeb"></div>
<div class="ck" style="left:66.7px;top:1237.3px"></div>
<div class="t" style="left:90px;top:1236px;font-size:13px;line-height:16px;color:#000">Рыбалка</div>
<div class="num" style="left:1020px;width:150px;top:1235.3px">763</div>
<div class="num" style="left:1136px;width:150px;top:1235.3px">563</div>
<div class="num" style="left:1307px;top:1235.3px;text-align:left;transform-origin:0 50%">75,8<span style="margin-left:1.5px">%</span></div>
<div class="num" style="left:1368px;width:150px;top:1235.3px">11,9<span style="margin-left:1.5px">%</span></div>
<div class="num" style="left:1463px;width:150px;top:1235.3px">2,92</div>
<div class="num" style="left:1548px;width:150px;top:1235.3px">8:13</div>
<div class="bar" style="left:1096px;top:1252.8px;width:74px"><i style="width:0.9px"></i></div>
<div class="bar" style="left:1192.3px;top:1252.8px;width:93.7px"><i style="width:1.1px"></i></div>
<div class="bar" style="left:1449.6px;top:1252.8px;width:68.4px"><i style="width:56.9px"></i></div>
<div class="bar" style="left:1539.8px;top:1252.8px;width:73.2px"><i style="width:68.9px"></i></div>
<div class="bar" style="left:1634px;top:1252.8px;width:64px"><i style="width:57px"></i></div>
<div class="abs" style="left:1307px;top:1252.8px;width:60.8px;height:3px;background:#fbdfdc"></div>
<div class="abs" style="left:1367.8px;top:1252.8px;width:60.8px;height:3px;background:#dff3dc"></div>
<div class="abs" style="left:1353.1px;top:1252.8px;width:14.7px;height:3px;background:#ea7a82"></div>
<div class="abs" style="left:0;top:1296.1px;width:1708px;height:1px;background:#ebebeb"></div>
<div class="ck" style="left:66.7px;top:1273.3px"></div>
<div class="t" style="left:90px;top:1272px;font-size:13px;line-height:16px;color:#000">Охота</div>
<div class="num" style="left:1020px;width:150px;top:1271.3px">271</div>
<div class="num" style="left:1136px;width:150px;top:1271.3px">185</div>
<div class="num" style="left:1307px;top:1271.3px;text-align:left;transform-origin:0 50%">55<span style="margin-left:1.5px">%</span></div>
<div class="num" style="left:1368px;width:150px;top:1271.3px">10,7<span style="margin-left:1.5px">%</span></div>
<div class="num" style="left:1463px;width:150px;top:1271.3px">3,22</div>
<div class="num" style="left:1548px;width:150px;top:1271.3px">10:04</div>
<div class="bar" style="left:1096px;top:1288.8px;width:74px"><i style="width:0.3px"></i></div>
<div class="bar" style="left:1192.3px;top:1288.8px;width:93.7px"><i style="width:0.4px"></i></div>
<div class="bar" style="left:1449.6px;top:1288.8px;width:68.4px"><i style="width:51.2px"></i></div>
<div class="bar" style="left:1539.8px;top:1288.8px;width:73.2px"><i style="width:73.2px"></i></div>
<div class="bar" style="left:1634px;top:1288.8px;width:64px"><i style="width:64px"></i></div>
<div class="abs" style="left:1307px;top:1288.8px;width:60.8px;height:3px;background:#fbdfdc"></div>
<div class="abs" style="left:1367.8px;top:1288.8px;width:60.8px;height:3px;background:#dff3dc"></div>
<div class="abs" style="left:1340.4px;top:1288.8px;width:27.4px;height:3px;background:#ea7a82"></div>
<div class="abs" style="left:0;top:1332.2px;width:1708px;height:1px;background:#ebebeb"></div>
<div class="abs" style="left:0;top:1296.9px;width:4.5px;height:36px;background:#ffd963"></div>
<div class="tg p" style="left:17.5px;top:1308.9px"></div>
<div class="ck on" style="left:43px;top:1308.9px"><svg viewBox="0 0 15 16"><path d="M2 7.8l3.5 4.8C7 8 9.8 3.8 13.3 .6" fill="none" stroke="#111" stroke-width="1.8"/></svg></div>
<div class="t" style="left:66.3px;top:1308.1px;font-size:13px;line-height:16px;color:#000">Отдых и путешествия</div>
<div class="num" style="left:1020px;width:150px;top:1307.4px">50 236</div>
<div class="num" style="left:1136px;width:150px;top:1307.4px">35 629</div>
<div class="num" style="left:1278.6px;width:150px;top:1307.4px">165<span style="margin-left:1.5px">%</span></div>
<div class="num" style="left:1368px;width:150px;top:1307.4px">13,7<span style="margin-left:1.5px">%</span></div>
<div class="num" style="left:1463px;width:150px;top:1307.4px">2,92</div>
<div class="num" style="left:1548px;width:150px;top:1307.4px">7:25</div>
<div class="bar" style="left:1096px;top:1324.9px;width:74px"><i style="width:57.5px"></i></div>
<div class="bar" style="left:1192.3px;top:1324.9px;width:93.7px"><i style="width:71.2px"></i></div>
<div class="bar" style="left:1449.6px;top:1324.9px;width:68.4px"><i style="width:65.5px"></i></div>
<div class="bar" style="left:1539.8px;top:1324.9px;width:73.2px"><i style="width:68.9px"></i></div>
<div class="bar" style="left:1634px;top:1324.9px;width:64px"><i style="width:51.4px"></i></div>
<div class="abs" style="left:1307px;top:1324.9px;width:60.8px;height:3px;background:#fbdfdc"></div>
<div class="abs" style="left:1367.8px;top:1324.9px;width:60.8px;height:3px;background:#dff3dc"></div>
<div class="abs" style="left:1367.8px;top:1324.9px;width:24px;height:3px;background:#6cc26a"></div>
<div class="abs" style="left:0;top:1368.2px;width:1708px;height:1px;background:#ebebeb"></div>
<div class="abs" style="left:0;top:1332.9px;width:4.5px;height:36px;background:#fd5a3e"></div>
<div class="tg p" style="left:17.5px;top:1344.9px"></div>
<div class="ck on" style="left:43px;top:1344.9px"><svg viewBox="0 0 15 16"><path d="M2 7.8l3.5 4.8C7 8 9.8 3.8 13.3 .6" fill="none" stroke="#111" stroke-width="1.8"/></svg></div>
<div class="t" style="left:66.3px;top:1344.1px;font-size:13px;line-height:16px;color:#000">Одежда, обувь и аксессуары</div>
<div class="num" style="left:1020px;width:150px;top:1343.4px">37 878</div>
<div class="num" style="left:1136px;width:150px;top:1343.4px">27 214</div>
<div class="num" style="left:1278.6px;width:150px;top:1343.4px">191<span style="margin-left:1.5px">%</span></div>
<div class="num" style="left:1368px;width:150px;top:1343.4px">13,3<span style="margin-left:1.5px">%</span></div>
<div class="num" style="left:1463px;width:150px;top:1343.4px">2,98</div>
<div class="num" style="left:1548px;width:150px;top:1343.4px">7:31</div>
<div class="bar" style="left:1096px;top:1360.9px;width:74px"><i style="width:43.3px"></i></div>
<div class="bar" style="left:1192.3px;top:1360.9px;width:93.7px"><i style="width:54.4px"></i></div>
<div class="bar" style="left:1449.6px;top:1360.9px;width:68.4px"><i style="width:63.6px"></i></div>
<div class="bar" style="left:1539.8px;top:1360.9px;width:73.2px"><i style="width:70.4px"></i></div>
<div class="bar" style="left:1634px;top:1360.9px;width:64px"><i style="width:52.1px"></i></div>
<div class="abs" style="left:1307px;top:1360.9px;width:60.8px;height:3px;background:#fbdfdc"></div>
<div class="abs" style="left:1367.8px;top:1360.9px;width:60.8px;height:3px;background:#dff3dc"></div>
<div class="abs" style="left:1367.8px;top:1360.9px;width:29px;height:3px;background:#6cc26a"></div>
<div class="abs" style="left:0;top:1404.3px;width:1708px;height:1px;background:#ebebeb"></div>
<div class="abs" style="left:0;top:1369px;width:4.5px;height:36px;background:#77b6e7"></div>
<div class="tg p" style="left:17.5px;top:1381px"></div>
<div class="ck on" style="left:43px;top:1381px"><svg viewBox="0 0 15 16"><path d="M2 7.8l3.5 4.8C7 8 9.8 3.8 13.3 .6" fill="none" stroke="#111" stroke-width="1.8"/></svg></div>
<div class="t" style="left:66.3px;top:1380.2px;font-size:13px;line-height:16px;color:#000">Финансы</div>
<div class="num" style="left:1020px;width:150px;top:1379.5px">30 000</div>
<div class="num" style="left:1136px;width:150px;top:1379.5px">20 000</div>
<div class="num" style="left:1278.6px;width:150px;top:1379.5px">150<span style="margin-left:1.5px">%</span></div>
<div class="num" style="left:1368px;width:150px;top:1379.5px">13<span style="margin-left:1.5px">%</span></div>
<div class="num" style="left:1463px;width:150px;top:1379.5px">2,9</div>
<div class="num" style="left:1548px;width:150px;top:1379.5px">7:00</div>
<div class="bar" style="left:1096px;top:1397px;width:74px"><i style="width:34.3px"></i></div>
<div class="bar" style="left:1192.3px;top:1397px;width:93.7px"><i style="width:40px"></i></div>
<div class="bar" style="left:1449.6px;top:1397px;width:68.4px"><i style="width:62.2px"></i></div>
<div class="bar" style="left:1539.8px;top:1397px;width:73.2px"><i style="width:68.5px"></i></div>
<div class="bar" style="left:1634px;top:1397px;width:64px"><i style="width:48.5px"></i></div>
<div class="abs" style="left:1307px;top:1397px;width:60.8px;height:3px;background:#fbdfdc"></div>
<div class="abs" style="left:1367.8px;top:1397px;width:60.8px;height:3px;background:#dff3dc"></div>
<div class="abs" style="left:1367.8px;top:1397px;width:20.3px;height:3px;background:#6cc26a"></div>
</div></div></body></html>
